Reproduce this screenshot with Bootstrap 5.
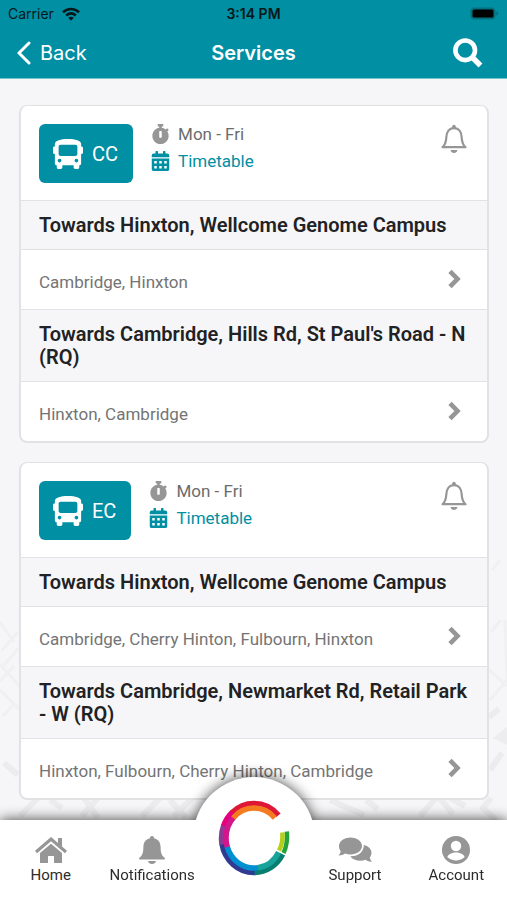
<!DOCTYPE html>
<html lang="en">
<head>
<meta charset="utf-8">
<meta name="viewport" content="width=device-width, initial-scale=1">
<title>Services</title>
<link href="https://cdn.jsdelivr.net/npm/bootstrap@5.3.0/dist/css/bootstrap.min.css" rel="stylesheet">
<style>
:root { --teal: #008fa3; --line: #e2e2e4; --pale: #f6f6f8; --icon: #969696; }
body { font-family: Roboto, "Liberation Sans", sans-serif; background: var(--pale); color: #212224; }
svg { display: block; flex: none; }
.app-top { background: var(--teal); border-bottom: 1px solid #74c5d0; font-family: Inter, "Liberation Sans", sans-serif; }
.status-row { height: 28px; font-size: 14px; line-height: 28px; padding: 0 8px; color: #06171a; }
.status-row > *, .title-row > * { flex: 1 1 0; }
.title-row { height: 50px; padding: 0 16px; font-size: 20px; line-height: 24px; color: #fff; }
.title-row h1 { font-size: 20px; line-height: 24px; font-weight: 600; }
.plain-btn { background: none; border: 0; padding: 0; }
.app-main { overflow: hidden; padding: 26px 18px 0 19px; gap: 19px; }
.street-map { z-index: 0; pointer-events: none; }
.service { z-index: 1; border: 2px solid var(--line); border-radius: 8px; border-width: 1px 2px 2px; background: #fff; }
.service-head { height: 94px; padding: 18px 20px 0 18px; }
.route-badge { height: 59px; padding: 0 15px 0 14px; gap: 9px; border-radius: 6px; background: var(--teal); color: #fff; font-size: 20px; margin-right: 18px; }
.head-lines { gap: 7px; }
.head-line { gap: 8px; font-size: 17px; line-height: 20px; color: #6c6c6c; }
.head-line a { color: var(--teal); }
.head-line svg { width: 19px; }
.direction { font-size: 20px; line-height: 23px; font-weight: 600; background: var(--pale); border: solid var(--line); border-width: 1px 0; padding: 13px 18px 12px; }
.stops { height: 59px; padding: 5px 26px 0 18px; font-size: 17px; line-height: 24px; color: #747474; }
.stops svg { margin-bottom: 6px; }
.tabs { z-index: 2; height: 80px; background: #fff; filter: drop-shadow(0 0 7px rgba(0, 0, 0, .75)); }
.tabs > * { flex: 1 1 0; }
.tab-item { padding-top: 16px; font-size: 15px; line-height: 22px; color: #2c2c2c; }
.hub-cell { min-width: 0; }
.hub { height: 122px; width: 122px; margin-top: -43px; border-radius: 50%; background: #fff; }
</style>
<script src="https://cdn.jsdelivr.net/npm/bootstrap@5.3.0/dist/js/bootstrap.bundle.min.js"></script>
</head>
<body class="vh-100 d-flex flex-column overflow-hidden">

<svg width="0" height="0" class="position-absolute" aria-hidden="true">
  <symbol id="bus" viewBox="0 0 512 512"><path fill="currentColor" d="M488 128h-8V80c0-44.800-99.200-80-224-80S32 35.200 32 80v48h-8c-13.250 0-24 10.740-24 24v80c0 13.250 10.750 24 24 24h8v160c0 17.670 14.330 32 32 32v32c0 17.670 14.330 32 32 32h32c17.670 0 32-14.330 32-32v-32h192v32c0 17.670 14.330 32 32 32h32c17.670 0 32-14.330 32-32v-32h6.400c16 0 25.600-12.800 25.600-25.600V256h8c13.250 0 24-10.750 24-24v-80c0-13.260-10.750-24-24-24zM112 400c-17.670 0-32-14.330-32-32s14.330-32 32-32 32 14.330 32 32-14.330 32-32 32zm16-112c-17.670 0-32-14.330-32-32V128c0-17.670 14.330-32 32-32h256c17.670 0 32 14.330 32 32v128c0 17.670-14.330 32-32 32H128zm272 112c-17.670 0-32-14.330-32-32s14.330-32 32-32 32 14.330 32 32-14.330 32-32 32z"/></symbol>
  <symbol id="stopwatch" viewBox="0 0 448 512"><path fill="currentColor" d="M432 304c0 114.900-93.100 208-208 208S16 418.900 16 304c0-104 76.300-190.200 176-205.500V64h-28c-6.600 0-12-5.400-12-12V12c0-6.600 5.400-12 12-12h120c6.600 0 12 5.400 12 12v40c0 6.600-5.400 12-12 12h-28v34.500c37.500 5.800 71.700 21.600 99.700 44.600l27.500-27.500c4.700-4.700 12.300-4.700 17 0l28.300 28.300c4.700 4.700 4.700 12.300 0 17l-30 30C419.700 223.300 432 262.200 432 304zm-176 36V188.500c0-6.600-5.400-12-12-12h-40c-6.600 0-12 5.400-12 12V340c0 6.600 5.400 12 12 12h40c6.600 0 12-5.400 12-12z"/></symbol>
  <symbol id="calendar" viewBox="0 0 448 512"><path fill="currentColor" fill-rule="evenodd" d="M0 160v-48c0-26.500 21.500-48 48-48h48V12q0-12 12-12h40q12 0 12 12v52h128V12q0-12 12-12h40q12 0 12 12v52h48c26.500 0 48 21.500 48 48v48zM0 192h448v272c0 26.500-21.500 48-48 48H48c-26.500 0-48-21.500-48-48zM64 256v64h64v-64zM192 256v64h64v-64zM320 256v64h64v-64zM64 384v64h64v-64zM192 384v64h64v-64zM320 384v64h64v-64z"/></symbol>
  <symbol id="bell-line" viewBox="0 0 26 30"><path fill="none" stroke="currentColor" stroke-width="2.200" stroke-linejoin="round" d="M1.500 23.200c3-2.700 3.600-5.500 3.800-9.700.2-5.500 3-9.300 7.700-9.300s7.500 3.800 7.700 9.300c.2 4.200.8 7 3.800 9.700z"/><path fill="currentColor" d="M11 4.500c-.3-5 4.300-5 4 0zM9.500 26h7c-.5 4-6.500 4-7 0z"/></symbol>
  <symbol id="chevron" viewBox="0 0 13 20"><path fill="none" stroke="currentColor" stroke-width="4.600" d="M2 2.300 9.500 10 2 17.700"/></symbol>
</svg>

<header class="app-top flex-shrink-0">
  <div class="status-row d-flex align-items-center">
    <div class="d-flex align-items-center gap-2">
      <span>Carrier</span>
      <svg width="18" height="14" viewBox="0 0 18 14" aria-hidden="true"><g fill="none" stroke="#06171a" stroke-width="2.600"><path d="M1 5.200c4.600-4.300 11.400-4.300 16 0"/><path d="M4.200 8.500c2.900-2.500 6.700-2.500 9.600 0"/></g><path fill="#06171a" d="M6.200 10.800q2.800-2.200 5.600 0L9 13.700z"/></svg>
    </div>
    <div class="text-center fw-semibold">3:14 PM</div>
    <div class="d-flex justify-content-end">
      <svg width="30" height="14" viewBox="0 0 30 14" aria-hidden="true"><rect x="1.500" y=".5" width="25" height="12" rx="4" fill="#04707f"/><rect x="3.500" y="2.500" width="21" height="8" rx="1.500"/><path fill="#04606d" d="M27.500 4.300q3 2.200 0 4.400z"/></svg>
    </div>
  </div>
  <div class="title-row d-flex align-items-center">
    <div><button type="button" class="plain-btn text-white d-flex align-items-center gap-2">
      <svg width="16" height="24" viewBox="0 0 16 24" aria-hidden="true"><path fill="none" stroke="#fff" stroke-width="3" stroke-linecap="round" stroke-linejoin="round" d="M13 2 3 12l10 10"/></svg>
      <span>Back</span></button></div>
    <h1 class="m-0 text-center">Services</h1>
    <div class="d-flex justify-content-end"><button type="button" class="plain-btn me-2" aria-label="Search">
      <svg width="30" height="30" viewBox="0 0 30 30" aria-hidden="true"><g fill="none" stroke="#fff"><circle cx="12.200" cy="12.300" r="9.800" stroke-width="4.600"/><path stroke-width="5.400" d="m19 19 8.500 8.500"/></g></svg></button></div>
  </div>
</header>

<main class="app-main flex-grow-1 d-flex flex-column position-relative">
  <svg class="street-map position-absolute bottom-0 start-0 w-100" height="260" viewBox="0 0 507 260" preserveAspectRatio="none" aria-hidden="true">
    <g fill="none" stroke="#ececef" stroke-width="3"><path stroke-opacity=".6" d="M0 62l14 20M2 90l16-18M4 105l15-17M0 121l14-15M0 104l20 23M0 130l20 20M3 156l12-13M491 72l10-12M488 109l19 17M490 140l17-20M492 10l8-10M505 60l2 60"/><path stroke-width="6" d="M4 203l14 12M20 256l22-22 18 3M50 240l12 8M80 232l18 26M98 238l-16 18M142 256l20-20M170 240l16 18M192 238l-18 18M330 240l34 15M366 240l12 9M420 256l18-20 15 18M450 238l15 8"/><path stroke-width="6" d="M489 157l10-8M490 210l12-17M491 238l-8 10 13 12"/></g>
    <path fill="#ededef" d="M493 178l14-11v18z"/>
  </svg>

  <section class="service position-relative overflow-hidden flex-shrink-0">
    <div class="service-head d-flex align-items-start">
      <div class="route-badge d-flex align-items-center"><svg width="30" height="30" aria-hidden="true"><use href="#bus"/></svg><span>CC</span></div>
      <div class="head-lines flex-grow-1 d-flex flex-column">
        <div class="head-line d-flex align-items-center"><svg height="20" style="color:var(--icon)" aria-hidden="true"><use href="#stopwatch"/></svg>Mon - Fri</div>
        <div class="head-line d-flex align-items-center"><svg height="20" style="color:var(--teal)" aria-hidden="true"><use href="#calendar"/></svg><a href="#" class="text-decoration-none">Timetable</a></div>
      </div>
      <button type="button" class="plain-btn" style="color:var(--icon)" aria-label="Notify me about CC"><svg width="26" height="30" aria-hidden="true"><use href="#bell-line"/></svg></button>
    </div>
    <h2 class="direction m-0">Towards Hinxton, Wellcome Genome Campus</h2>
    <a href="#" class="stops d-flex align-items-center justify-content-between text-decoration-none"><span>Cambridge, Hinxton</span><svg width="13" height="20" style="color:var(--icon)" aria-hidden="true"><use href="#chevron"/></svg></a>
    <h2 class="direction m-0">Towards Cambridge, Hills Rd, St Paul's Road - N (RQ)</h2>
    <a href="#" class="stops d-flex align-items-center justify-content-between text-decoration-none"><span>Hinxton, Cambridge</span><svg width="13" height="20" style="color:var(--icon)" aria-hidden="true"><use href="#chevron"/></svg></a>
  </section>

  <section class="service position-relative overflow-hidden flex-shrink-0">
    <div class="service-head d-flex align-items-start">
      <div class="route-badge d-flex align-items-center"><svg width="30" height="30" aria-hidden="true"><use href="#bus"/></svg><span>EC</span></div>
      <div class="head-lines flex-grow-1 d-flex flex-column">
        <div class="head-line d-flex align-items-center"><svg height="20" style="color:var(--icon)" aria-hidden="true"><use href="#stopwatch"/></svg>Mon - Fri</div>
        <div class="head-line d-flex align-items-center"><svg height="20" style="color:var(--teal)" aria-hidden="true"><use href="#calendar"/></svg><a href="#" class="text-decoration-none">Timetable</a></div>
      </div>
      <button type="button" class="plain-btn" style="color:var(--icon)" aria-label="Notify me about EC"><svg width="26" height="30" aria-hidden="true"><use href="#bell-line"/></svg></button>
    </div>
    <h2 class="direction m-0">Towards Hinxton, Wellcome Genome Campus</h2>
    <a href="#" class="stops d-flex align-items-center justify-content-between text-decoration-none"><span>Cambridge, Cherry Hinton, Fulbourn, Hinxton</span><svg width="13" height="20" style="color:var(--icon)" aria-hidden="true"><use href="#chevron"/></svg></a>
    <h2 class="direction m-0">Towards Cambridge, Newmarket Rd, Retail Park - W (RQ)</h2>
    <a href="#" class="stops d-flex align-items-center justify-content-between text-decoration-none"><span>Hinxton, Fulbourn, Cherry Hinton, Cambridge</span><svg width="13" height="20" style="color:var(--icon)" aria-hidden="true"><use href="#chevron"/></svg></a>
  </section>
</main>

<nav class="tabs position-relative flex-shrink-0 d-flex">
  <a href="#" class="tab-item d-flex flex-column align-items-center text-decoration-none">
    <svg width="32" height="28" viewBox="0 0 32 28" fill="#969696" aria-hidden="true"><path d="M16 1 23 7V2h4v8.500l5 4.300-2 2.400L16 5.200 2 17.200l-2-2.400z"/><path d="M16 7.800 27 17v10h-8v-7h-6v7H5V17z"/></svg>
    <span>Home</span></a>
  <a href="#" class="tab-item d-flex flex-column align-items-center text-decoration-none">
    <svg width="26" height="28" viewBox="0 0 26 28" fill="#969696" aria-hidden="true"><path d="M13 0c1.300 0 2 .9 2 2.200 4.500 1 6.500 4.300 6.600 8.800.1 5.500.7 8.500 4.200 10.800v1.700H.2v-1.700C3.700 19.500 4.300 16.500 4.400 11c.1-4.500 2.100-7.800 6.600-8.800C11 .9 11.700 0 13 0zM9 25h8c-.5 4-7.500 4-8 0z"/></svg>
    <span>Notifications</span></a>
  <div class="hub-cell d-flex justify-content-center"><a href="#" class="hub flex-shrink-0 d-flex align-items-center justify-content-center" aria-label="Journey planner">
    <svg width="74" height="78" viewBox="-37 -39 74 78" fill="none" aria-hidden="true">
      <g stroke-width="5.500">
        <ellipse rx="32.500" ry="34.500" pathLength="360" stroke="#303a91" stroke-dasharray="82 278" stroke-dashoffset="-88"/>
        <ellipse rx="32.500" ry="34.500" pathLength="360" stroke="#087e70" stroke-dasharray="60 300" stroke-dashoffset="-29"/>
        <ellipse rx="32.500" ry="34.500" pathLength="360" stroke="#8e3a94" stroke-dasharray="33 327" stroke-dashoffset="-169"/>
        <ellipse rx="32.500" ry="34.500" pathLength="360" stroke="#e5007e" stroke-dasharray="28 332" stroke-dashoffset="-201"/>
        <ellipse rx="32.500" ry="34.500" pathLength="360" stroke="#dd1735" stroke-dasharray="90 270" stroke-dashoffset="-228"/>
        <ellipse rx="28" ry="30" pathLength="360" stroke="#008fd0" stroke-dasharray="82 278" stroke-dashoffset="-81"/>
        <ellipse rx="28" ry="30" pathLength="360" stroke="#18a49a" stroke-dasharray="53 307" stroke-dashoffset="-29"/>
        <ellipse rx="28" ry="30" pathLength="360" stroke="#d3168b" stroke-dasharray="62 298" stroke-dashoffset="-162"/>
        <ellipse rx="28" ry="30" pathLength="360" stroke="#f47b20" stroke-dasharray="94 266" stroke-dashoffset="-223"/>
      </g>
      <path stroke="#25a33a" stroke-width="4.500" d="M32.800-6.500C33.600 2 32.400 9 29.500 15"/>
      <path stroke="#b5cf16" stroke-width="4.500" d="M28.300-5.500C29 1 28 7 25 12.500"/>
    </svg></a></div>
  <a href="#" class="tab-item d-flex flex-column align-items-center text-decoration-none">
    <svg width="34" height="28" viewBox="0 0 34 28" fill="#969696" aria-hidden="true"><path d="M12.500 1.500C19 1.500 24 5.200 24 10s-5 8.500-11.500 8.500c-2 0-3.800-.4-5.400-1C5.500 18.700 3 19.600.5 19.500c1.200-1.300 2-2.800 2.200-4.300C1.600 13.700 1 12 1 10c0-4.800 5-8.500 11.500-8.500z"/><path d="M25.800 9C30.300 10 33.500 13 33.500 16.800c0 1.800-.6 3.400-1.700 4.700.3 1.700 1 3 2.200 4.300-2.500.1-4.900-.8-6.600-2-1.500.6-3 .9-4.900.9-4.600 0-8.400-1.700-10.200-4.500C20 20.500 26 16 25.800 9z"/></svg>
    <span>Support</span></a>
  <a href="#" class="tab-item d-flex flex-column align-items-center text-decoration-none">
    <svg width="28" height="28" viewBox="0 0 28 28" aria-hidden="true"><circle cx="14" cy="14" r="14" fill="#969696"/><circle cx="14" cy="10" r="5.200" fill="#fff"/><path fill="#fff" d="M5.300 21c1.200-3 4.800-4.500 8.700-4.500s7.500 1.500 8.700 4.500c-4.600 4.600-12.800 4.600-17.400 0z"/></svg>
    <span>Account</span></a>
</nav>
</body>
</html>
